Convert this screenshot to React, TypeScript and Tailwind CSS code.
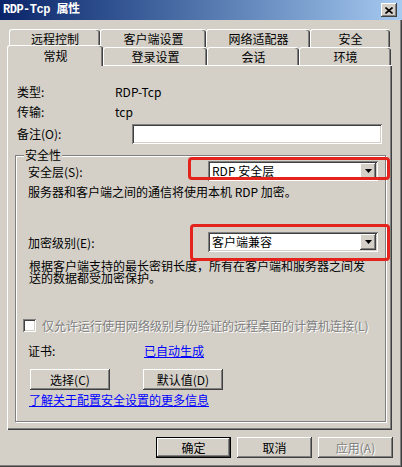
import React from "react";

const raised =
  "shadow-[inset_-1px_-1px_#404040,inset_1px_1px_#ffffff,inset_-2px_-2px_#808080,inset_2px_2px_#d4d0c8]";
const sunken =
  "shadow-[inset_1px_1px_#808080,inset_-1px_-1px_#ffffff,inset_2px_2px_#404040,inset_-2px_-2px_#d4d0c8]";

function Arrow() {
  return (
    <svg width="7" height="4" viewBox="0 0 7 4">
      <path d="M0 0H7L3.5 4Z" fill="#000" />
    </svg>
  );
}

function Combo({ value, red }: { value: string; red: "a" | "b" }) {
  return (
    <div className={`relative w-[170px] h-[20px] bg-white flex items-center ${sunken}`}>
      <span className="pl-[4px] leading-[12px] text-black">{value}</span>
      <div className={`ml-auto mr-[2px] w-[16px] h-[16px] bg-[#d4d0c8] flex items-center justify-center ${raised}`}>
        <Arrow />
      </div>
      {red === "a" ? (
        <div className="absolute left-[-20px] top-[-4px] right-[-12px] bottom-[1px] border-[3px] border-[#e4231c] rounded-[4px] pointer-events-none" />
      ) : (
        <div className="absolute left-[-18px] top-[-8px] right-[-12px] bottom-[-9px] border-[3px] border-[#e4231c] rounded-[4px] pointer-events-none" />
      )}
    </div>
  );
}

function Tab({ label, w, selected }: { label: string; w: string; selected?: boolean }) {
  return (
    <div
      className={`${w} ${
        selected ? "h-[21px] -mt-[2px] relative z-10" : "h-[18px]"
      } bg-[#d4d0c8] border-t border-l border-white rounded-t-[3px] shadow-[inset_-1px_0_#404040,inset_-2px_0_#808080] flex items-center justify-center leading-[12px]`}
    >
      {label}
    </div>
  );
}

function Btn({ label, w, def, disabled }: { label: string; w: string; def?: boolean; disabled?: boolean }) {
  return (
    <div className={`${w} h-[21px] ${def ? "border border-black" : ""} bg-[#d4d0c8]`}>
      <div
        className={`w-full h-full flex items-center justify-center leading-[12px] ${raised} ${
          disabled ? "text-[#808080] [text-shadow:1px_1px_0_#ffffff]" : "text-black"
        }`}
      >
        {label}
      </div>
    </div>
  );
}

export default function App() {
  return (
    <div className="w-[402px] h-[467px] overflow-hidden bg-[#d4d0c8] font-['Noto_Sans_CJK_SC',sans-serif] text-[12px] text-black flex flex-col shadow-[inset_-1px_-1px_#404040,inset_-2px_-2px_#808080]">
      {/* Title bar */}
      <div className="h-[20px] shrink-0 bg-gradient-to-r from-[#0a246a] to-[#a6caf0] flex items-center pl-[3px] pr-[5px]">
        <span className="font-['Liberation_Mono','Noto_Sans_CJK_SC',monospace] font-bold text-white leading-[12px] tracking-[-0.5px]">
          RDP-Tcp 属性
        </span>
        <div className={`ml-auto w-[16px] h-[14px] bg-[#d4d0c8] flex items-center justify-center ${raised}`}>
          <svg width="8" height="7" viewBox="0 0 8 7">
            <path d="M0.5 0.5L7.5 6.5M7.5 0.5L0.5 6.5" stroke="#000" strokeWidth="1.6" />
          </svg>
        </div>
      </div>

      {/* Tabs */}
      <div className="pt-[9px] flex flex-col">
        <div className="flex ml-[9px]">
          <Tab label="远程控制" w="w-[91px]" />
          <Tab label="客户端设置" w="w-[106px]" />
          <Tab label="网络适配器" w="w-[104px]" />
          <Tab label="安全" w="w-[80px]" />
        </div>
        <div className="flex ml-[7px] h-[18px]">
          <Tab label="常规" w="w-[96px]" selected />
          <Tab label="登录设置" w="w-[104px]" />
          <Tab label="会话" w="w-[92px]" />
          <Tab label="环境" w="w-[92px]" />
        </div>
      </div>

      {/* Panel */}
      <div className="ml-[7px] w-[385px] h-[365px] shrink-0 border-t border-l border-white shadow-[inset_-1px_-1px_#404040,inset_-2px_-2px_#808080] px-[7px] pt-[19px] flex flex-col">
        <div className="flex items-center h-[14px] pl-[2px] leading-[12px]">
          <span className="w-[98px]">类型:</span>
          <span>RDP-Tcp</span>
        </div>
        <div className="flex items-center h-[14px] mt-[6px] pl-[2px] leading-[12px]">
          <span className="w-[98px]">传输:</span>
          <span>tcp</span>
        </div>
        <div className="flex items-center h-[20px] mt-[5px] pl-[2px] leading-[12px]">
          <span className="w-[115px]">备注(O):</span>
          <div className={`w-[250px] h-[20px] bg-white ${sunken}`} />
        </div>

        {/* Group box */}
        <div className="mt-[11px] w-[371px] h-[267px] border border-[#808080] shadow-[1px_1px_0_#ffffff,inset_1px_1px_0_#ffffff] flex flex-col pl-[12px]">
          <div className="-mt-[7px] -ml-[4px] w-fit px-[1px] bg-[#d4d0c8] leading-[12px]">安全性</div>

          <div className="flex items-start mt-[0px] h-[20px]">
            <span className="w-[180px] mt-[5px] leading-[12px]">安全层(S):</span>
            <Combo value="RDP 安全层" red="a" />
          </div>
          <div className="mt-[5px] leading-[12px]">服务器和客户端之间的通信将使用本机 RDP 加密。</div>

          <div className="flex items-start mt-[34px] h-[20px]">
            <span className="w-[180px] mt-[5px] leading-[12px]">加密级别(E):</span>
            <Combo value="客户端兼容" red="b" />
          </div>
          <div className="mt-[8px] w-[340px] leading-[12px] pl-[1px]">
            根据客户端支持的最长密钥长度，所有在客户端和服务器之间发送的数据都受加密保护。
          </div>

          <div className="flex items-center mt-[35px] -ml-[5px] h-[13px]">
            <div className={`w-[13px] h-[13px] bg-white ${sunken}`} />
            <span className="ml-[6px] leading-[12px] text-[#808080] [text-shadow:1px_1px_0_#ffffff]">
              仅允许运行使用网络级别身份验证的远程桌面的计算机连接(L)
            </span>
          </div>

          <div className="flex items-center mt-[13px] h-[12px] leading-[12px]">
            <span className="w-[116px]">证书:</span>
            <span className="text-[#0000ff] underline">已自动生成</span>
          </div>

          <div className="flex mt-[12px] ml-[2px] gap-[33px]">
            <Btn label="选择(C)" w="w-[80px]" />
            <Btn label="默认值(D)" w="w-[80px]" />
          </div>

          <div className="mt-[4px] ml-[1px] leading-[12px] text-[#0000ff] underline w-fit">
            了解关于配置安全设置的更多信息
          </div>
        </div>
      </div>

      {/* Bottom buttons */}
      <div className="flex justify-end gap-[6px] pr-[9px] mt-[7px]">
        <Btn label="确定" w="w-[75px]" def />
        <Btn label="取消" w="w-[75px]" />
        <Btn label="应用(A)" w="w-[75px]" disabled />
      </div>
    </div>
  );
}
